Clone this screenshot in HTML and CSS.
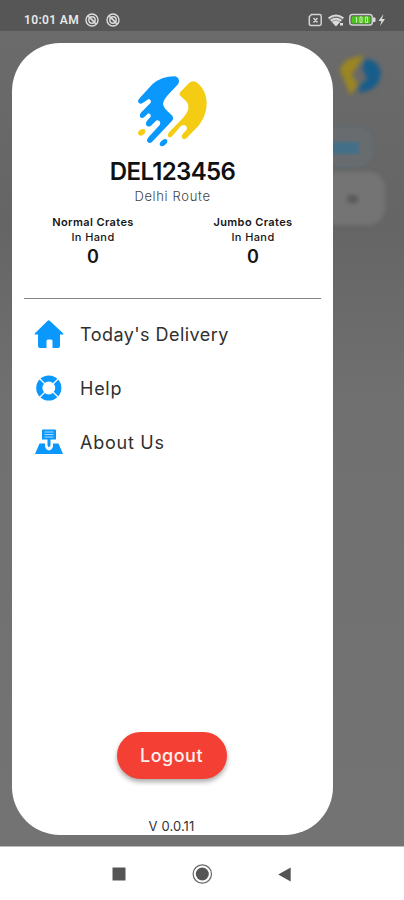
FILE: index.html
```html
<!DOCTYPE html>
<html lang="en">
<head>
<meta charset="utf-8">
<title>Delivery menu</title>
<link rel="stylesheet" href="styles.css">
</head>
<body>
<div class="phone">
  <header class="status">
    <span class="clock">10:01 AM</span>
    <svg class="mute" viewBox="0 0 14 14"><circle cx="7" cy="7" r="6"/><circle cx="7" cy="7" r="3.2"/><path d="M3 3l8 8M5.5 5l4 4"/></svg>
    <svg class="mute" viewBox="0 0 14 14"><circle cx="7" cy="7" r="6"/><circle cx="7" cy="7" r="3.2"/><path d="M3 3l8 8M5.5 5l4 4"/></svg>
    <svg class="signals" viewBox="0 0 80 14">
      <path class="line" d="M4.500 1.500h8q1.700 0 1.700 1.700v7.600q0 1.700-1.700 1.700h-8.500q-1.700 0-1.700-1.700v-7zM6.500 5l4 4.500M10.500 5l-4 4.500"/>
      <path class="fill" d="M21 4.500q8-6 16 0l-1.500 2q-6.500-4.800-13 0zM23 7q6-4.500 12 0l-6 6.500z"/>
      <path class="gap" d="M22.500 6q6.500-4.500 13 0M24.500 8.600q4.500-3 9 0"/>
      <path class="fill" d="M33 10h3v2.500h-3z"/>
      <rect class="line" x="42.800" y="1.500" width="22.500" height="10.500" rx="2.800"/>
      <path class="fill" d="M66 4.500h1.500q1 0 1 1v2.500q0 1-1 1H66z"/>
      <rect class="charge" x="44.500" y="3.200" width="19" height="7.200" rx="1"/>
      <path class="digits" d="M49.500 4v5.500M53 4v5.500h2V4zM58.500 4v5.500h2V4z"/>
      <path class="fill" d="M76.500 1l-5 7h3l-1.500 5 5-7h-3z"/>
    </svg>
  </header>
  <main class="screen">
    <div class="behind">
      <svg class="dim-logo" viewBox="0 0 44 46"><path class="dim-yellow" d="M25 2Q4 3 2 16l5 12 5 12 7-11-6-9z"/><path class="dim-blue" d="M26 5q12-1 15 13-1 17-21 19-1-7 8-13l-5-10z"/></svg>
      <div class="dim-chip"><i></i></div>
      <div class="dim-card"><i></i></div>
    </div>
    <aside class="drawer">
      <svg class="logo" viewBox="0 0 330 270">
        <path class="blue" d="M163 34C176 35 181 48 174 58L155 78Q129 104 129 116Q129 128 154 149Q164 158 155 169L96 231Q89 237 83 231Q78 225 86 216L119 180Q123 171 117 167Q111 164 105 170L93 182Q84 188 79 181Q75 174 83 165L92 155Q94 148 85 145L73 156Q65 162 60 155Q57 148 64 142L92 113Q95 105 86 102L67 115Q58 119 54 110Q53 105 60 98L97 58Q124 34 163 34Z"/>
        <path class="yellow" d="M181 81L205 56Q216 45 228 51C269 78 270 142 235 183L200 219Q192 226 186 219Q183 213 190 205L200 194Q203 186 195 181Q190 178 182 184L157 213Q151 220 145 215Q140 210 148 201L191 157Q214 129 201 112Q198 108 182 94Q176 88 181 81Z"/>
        <path class="yellow" d="M56 199q8-9 17-6 7 5 0 13-8 9-15 5-7-5-2-12z"/>
        <path class="blue" d="M122 230q10-11 17-7 7 6-1 14-9 9-16 6-6-5 0-13z"/>
      </svg>
      <h1 class="code">DEL123456</h1>
      <p class="route">Delhi Route</p>
      <section class="crates">
        <div class="crate"><b class="crate-name">Normal Crates</b><span class="crate-hand">In Hand</span><strong>0</strong></div>
        <div class="crate"><b class="crate-name">Jumbo Crates</b><span class="crate-hand">In Hand</span><strong>0</strong></div>
      </section>
      <nav class="menu">
        <a class="item"><svg viewBox="0 0 30 30"><path d="M13.700 1.700q1-.9 2 0L29.300 14.500q.7 1-.5 1H26V27q0 2-2 2h-5.500v-7q0-1.500-1.500-1.500h-3q-1.500 0-1.500 1.500v7H6q-2 0-2-2V15.500H1.200q-1.200 0-.5-1z"/></svg><span class="today">Today's Delivery</span></a>
        <a class="item"><svg viewBox="0 0 30 30"><circle class="ring" cx="14.800" cy="15" r="9.500"/><path class="cut" d="M4 4l7.500 7.500M26 4l-7.500 7.500M4 26l7.500-7.500M26 26l-7.500-7.500"/></svg><span class="help">Help</span></a>
        <a class="item"><svg viewBox="0 0 30 30"><path d="M9 2.500h12q1 0 1 1v9h-5.500v6l-1.500 2-1.500-2v-6H8v-9q0-1 1-1zM5.500 16.500h5.500v3q1 3.500 4 4 3-.5 4-4v-3h5.500L29 27H1z"/><path class="lines" d="M10.500 5h9M10.500 7.500h9M10.500 10h9"/></svg><span class="about">About Us</span></a>
      </nav>
      <button class="logout">Logout</button>
      <p class="version">V 0.0.11</p>
    </aside>
  </main>
  <footer class="keys">
    <svg viewBox="0 0 200 22"><path d="M10.500 4.500h13v13h-13z"/><circle class="halo" cx="100.300" cy="11" r="9.200"/><circle cx="100.300" cy="11" r="6.500"/><path d="M188.700 4.500v14l-12.500-7z"/></svg>
  </footer>
</div>
</body>
</html>
```
FILE: styles.css
```css
* { box-sizing: border-box; }
body { margin: 0; font-family: Inter, sans-serif; color: #222; }
h1, p { margin: 0; }
.phone { width: 404px; height: 900px; display: flex; flex-direction: column; overflow: hidden; background: #fff; }

.status { height: 31px; padding: 9px 17px 0 24px; display: flex; align-items: center; background: #565656; flex: none; }
.clock { font: 600 12px/14px Roboto, sans-serif; color: #e8e8e8; width: 61px; white-space: nowrap; letter-spacing: .35px; }
.mute { width: 14px; height: 14px; margin-right: 7px; fill: none; stroke: #dcdcdc; stroke-width: 1.4; }
.signals { width: 80px; height: 14px; margin-left: auto; }
.line { fill: none; stroke: #d2d2d2; stroke-width: 1.5; }
.fill { fill: #dcdcdc; }
.gap { fill: none; stroke: #565656; stroke-width: .5; }
.charge { fill: #4cc51c; }
.digits { fill: none; stroke: #c9efb5; stroke-width: 1; }

.screen { position: relative; height: 815px; padding: 12px 0 0 12px; flex: none; background: linear-gradient(#6b6b6b, #656565 24%, #707070 45%, #737373); }
.behind { position: absolute; top: 0; right: 0; width: 104px; height: 220px; }
.dim-logo { position: absolute; left: 38px; top: 23px; width: 46px; height: 48px; filter: blur(2px); }
.dim-yellow { fill: #9b8622; }
.dim-blue { fill: #175d8c; }
.dim-chip { position: absolute; left: 0; top: 95px; width: 74px; height: 42px; border: 1px solid #586b78; border-radius: 17px; filter: blur(1.5px); background: #686c6f; }
.dim-chip i { position: absolute; right: 14px; top: 15px; width: 35px; height: 12px; background: #446f88; }
.dim-card { position: absolute; left: 0; top: 141px; width: 85px; height: 53px; border-radius: 17px; background: #747474; filter: blur(2px); }
.dim-card i { position: absolute; left: 47px; top: 23px; width: 11px; height: 8px; border-radius: 4px; background: #585858; }

.drawer { position: relative; width: 321px; height: 792px; border-radius: 48px; background: #fff; display: flex; flex-direction: column; align-items: center; overflow: hidden; }
.logo { width: 110px; height: 90px; margin: 22px 0 0 5px; flex: none; }
.blue { fill: #0b98fc; }
.yellow { fill: #f4cc14; }
.code { font-size: 24px; line-height: 30px; font-weight: 600; color: #111; margin-top: 2px; letter-spacing: -.65px; }
.route { font-size: 13px; line-height: 18px; font-weight: 300; color: #444; letter-spacing: .65px; }
.crates { align-self: stretch; margin: 10px 12px 0; height: 84px; border-bottom: 1px solid #858585; display: flex; justify-content: space-between; flex: none; }
.crate { width: 138px; display: flex; flex-direction: column; align-items: center; font-size: 11px; line-height: 15px; color: #151515; }
.crate:last-child { width: 136px; }
.crate-name { font-weight: 600; letter-spacing: .4px; }
.crate-hand { font-weight: 500; letter-spacing: .4px; }
.crate strong { font-size: 18px; line-height: 23px; font-weight: 600; }
.menu { align-self: stretch; padding: 8px 0 0 22px; }
.item { height: 54px; display: flex; align-items: center; gap: 16px; font-size: 18px; color: #303030; }
.item svg { width: 30px; height: 30px; fill: #0b98fc; }
.item .ring { fill: none; stroke: #0b98fc; stroke-width: 6.2; }
.item .cut { stroke: #fff; stroke-width: 1.3; }
.item .lines { stroke: #a9dbff; stroke-width: 1; }
.today { letter-spacing: .45px; }
.help { letter-spacing: .75px; }
.about { letter-spacing: .75px; }
.logout { width: 110px; height: 47px; margin: auto 1px 0 0; border: 0; border-radius: 24px; background: #f44034; color: #fff0ee; font: 500 18px/47px Inter, sans-serif; letter-spacing: .5px; padding: 0 1px 0 0; box-shadow: 0 3px 5px #0005; flex: none; }
.version { font-size: 13px; line-height: 18px; font-weight: 400; color: #333; margin: 38px 2px 0 0; letter-spacing: .1px; }
.keys { flex: 1; display: flex; justify-content: center; padding-top: 16px; border-top: 1px solid #bbb; }
.keys svg { width: 200px; height: 22px; fill: #555; }
.keys .halo { fill: none; stroke: #686868; stroke-width: 1.2; }
```
